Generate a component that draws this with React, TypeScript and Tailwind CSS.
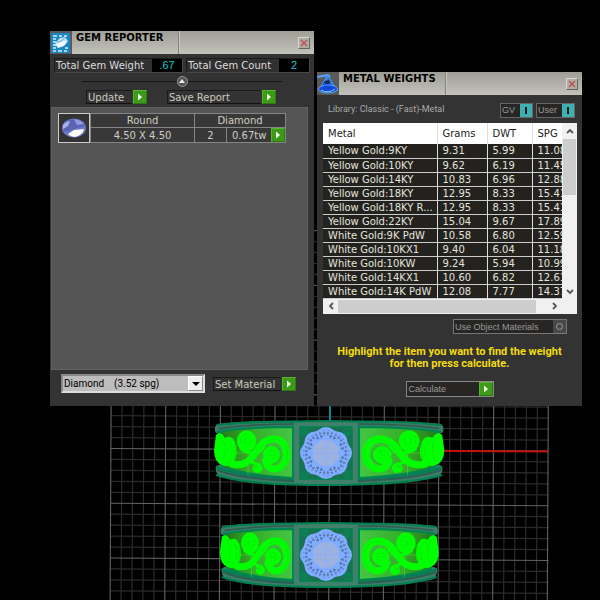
import { useState, type ReactNode } from "react";

const metals: [string, string, string, string][] = [
  ["Yellow Gold:9KY", "9.31", "5.99", "11.08"],
  ["Yellow Gold:10KY", "9.62", "6.19", "11.45"],
  ["Yellow Gold:14KY", "10.83", "6.96", "12.88"],
  ["Yellow Gold:18KY", "12.95", "8.33", "15.41"],
  ["Yellow Gold:18KY R...", "12.95", "8.33", "15.41"],
  ["Yellow Gold:22KY", "15.04", "9.67", "17.89"],
  ["White Gold:9K PdW", "10.58", "6.80", "12.59"],
  ["White Gold:10KX1", "9.40", "6.04", "11.18"],
  ["White Gold:10KW", "9.24", "5.94", "10.99"],
  ["White Gold:14KX1", "10.60", "6.82", "12.61"],
  ["White Gold:14K PdW", "12.08", "7.77", "14.37"],
];

const verdana = "font-['DejaVu_Sans',sans-serif]";
const arial = "font-['Liberation_Sans',sans-serif]";
const roboto = "font-[Roboto,sans-serif]";

function PlayIcon() {
  return (
    <span className="flex h-[14px] w-[14px] shrink-0 items-center justify-center border border-[#56b52d] border-r-[#2a7a10] border-b-[#2a7a10] bg-[#3d9a18]">
      <svg width="6" height="8" viewBox="0 0 6 8" aria-hidden="true">
        <path d="M1 0.5 L5 4 L1 7.5Z" fill="#f4ffe8" />
      </svg>
    </span>
  );
}

function TitleBar({ title, icon }: { title: string; icon: ReactNode }) {
  return (
    <header className="flex h-[23px] items-stretch bg-[#5a5a5a]">
      <span className="flex w-[22px] items-center justify-center">{icon}</span>
      <div className="flex flex-1 items-stretch bg-linear-to-b from-[#a09f97] via-[#b1b0a8] to-[#c4c3bb]">
        <h2 className={`${verdana} w-[107px] border-r border-[#85847c] pl-1 text-[10px] leading-[14px] font-bold whitespace-nowrap text-black`}>
          {title}
        </h2>
        <div className="flex flex-1 items-center justify-end border-l border-[#c9c8c0] pr-1">
          <button aria-label="Close" className="flex h-3 w-3 items-center justify-center border border-[#d8d7d0] border-r-[#68675f] border-b-[#68675f] bg-[#aeada5]">
            <svg width="8" height="8" viewBox="0 0 8 8" aria-hidden="true">
              <path d="M1 1L7 7M7 1L1 7" stroke="#c94444" strokeWidth="1.2" />
            </svg>
          </button>
        </div>
      </div>
    </header>
  );
}

function GemIcon() {
  return (
    <svg width="20" height="22" viewBox="0 0 20 22" aria-hidden="true">
      <rect y="1" width="19" height="20" fill="#1887c4" />
      <path d="M2 4h4M8 4h3M13 4h3M2 7h3M2 10h3M2 13h3M2 16h3M2 19h3M7 19h4M13 19h3M14 16h3" stroke="#d6efff" strokeWidth="1.5" />
      <path d="M5 10L9 6L14 5L17 9L14 13L7 15L4 13Z" fill="#bfe4f7" />
      <path d="M5 13L10 10L16 9L13 14L7 16Z" fill="#f4fbff" />
      <path d="M6 10L10 9L14 6" stroke="#5caed6" fill="none" />
    </svg>
  );
}

function ScaleIcon() {
  return (
    <svg width="22" height="22" viewBox="0 0 22 22" aria-hidden="true">
      <path d="M0 4L11 2L13 4" stroke="#4fa8ff" strokeWidth="2" fill="none" />
      <path d="M10 3L3 16M10 3L9 18M11 3L18 15" stroke="#3f8cff" strokeWidth="1.5" fill="none" />
      <path d="M8 8L5 13H15L12 7Z" fill="#0d2a66" />
      <ellipse cx="11" cy="16" rx="9.500" ry="4" fill="#1247d8" stroke="#58b1ff" />
      <path d="M4 17Q11 21 18 16" stroke="#8ad0ff" fill="none" />
      <path d="M7 11Q10 13 14 11" stroke="#2f6cff" strokeWidth="2" fill="none" />
    </svg>
  );
}

function CabochonIcon() {
  return (
    <svg width="28" height="24" viewBox="0 0 28 24" aria-hidden="true">
      <ellipse cx="14" cy="12" rx="12" ry="9.500" fill="#6c76c8" />
      <path d="M3 9Q8 3 15 3Q23 4 26 10L17 12L8 15L4 15Q2 12 3 9Z" fill="#5b63b4" />
      <path d="M3 9Q5 6 10 5L8 10L3 13Z" fill="#a9b2ee" />
      <path d="M14 3Q21 4 24 8L17 9Z" fill="#929be0" />
      <path d="M8 18L14 14L24 13Q23 19 15 21Q9 20 8 18Z" fill="#fff" />
    </svg>
  );
}

function Total({ label, value, width }: { label: string; value: string; width: string }) {
  return (
    <div className={`${width} flex h-[15px] justify-between border border-[#1b1b1b] border-r-[#484848] border-b-[#484848] bg-[#303030]`}>
      <span className="pl-px text-[10px] leading-[13px] whitespace-nowrap text-[#ddd]">{label}</span>
      <output className={`${arial} w-[30px] bg-black text-center text-[11px] leading-[13px] text-[#14c8cc]`}>{value}</output>
    </div>
  );
}

function ActionButton({ label, width }: { label: string; width: string }) {
  return (
    <button className="flex items-center gap-px text-left">
      <span className={`${width} h-[14px] border border-[#1a1a1a] border-r-[#333] border-b-[#111] pl-px text-[10px] leading-[13px] whitespace-nowrap text-[#cdcabd]`}>
        {label}
      </span>
      <PlayIcon />
    </button>
  );
}

function GemReporter() {
  const cell = "border border-[#858585] p-0 font-normal";
  return (
    <section className={`${verdana} absolute top-[31px] left-[50px] flex h-[375px] w-[264px] flex-col bg-[#333]`}>
      <TitleBar title="GEM REPORTER" icon={<GemIcon />} />
      <div className="flex justify-between px-1 pt-1">
        <Total label="Total Gem Weight" value=".67" width="w-[129px]" />
        <Total label="Total Gem Count" value="2" width="w-[124px]" />
      </div>
      <div className="relative mt-[2px] flex h-3 items-center justify-center">
        <input
          type="range"
          aria-label="Panel position"
          defaultValue={50}
          className="h-3 w-[200px] appearance-none bg-[linear-gradient(#151515,#151515)] bg-[length:100%_1px] bg-center bg-no-repeat [&::-webkit-slider-thumb]:h-[11px] [&::-webkit-slider-thumb]:w-[11px] [&::-webkit-slider-thumb]:appearance-none [&::-webkit-slider-thumb]:rounded-full [&::-webkit-slider-thumb]:border [&::-webkit-slider-thumb]:border-[#999] [&::-webkit-slider-thumb]:bg-[#555]"
        />
        <svg className="pointer-events-none absolute" width="6" height="4" viewBox="0 0 6 4" aria-hidden="true">
          <path d="M0 4L3 0L6 4Z" fill="#eee" />
        </svg>
      </div>
      <div className="flex gap-5 pt-[3px] pl-9">
        <ActionButton label="Update" width="w-[46px]" />
        <ActionButton label="Save Report" width="w-[94px]" />
      </div>
      <div className="mt-[3px] mr-[6px] ml-px flex h-[263px] items-start border border-[#616161] bg-[#555] pt-[5px] pl-[6px]">
        <div className="flex h-[30px] w-8 items-center justify-center border border-[#ccc] bg-[#333]">
          <CabochonIcon />
        </div>
        <table className="w-[195px] table-fixed border-collapse bg-[#383838] text-center text-[10px] leading-[13px] text-[#d0cdc4]">
          <colgroup>
            <col className="w-[104px]" />
            <col className="w-8" />
            <col className="w-[59px]" />
          </colgroup>
          <thead>
            <tr>
              <th className={cell}>Round</th>
              <th className={cell} colSpan={2}>Diamond</th>
            </tr>
          </thead>
          <tbody>
            <tr>
              <td className={cell}>4.50 X 4.50</td>
              <td className={cell}>2</td>
              <td className={cell}>
                <div className="flex h-[14px] items-center justify-between pl-[5px]">
                  0.67tw
                  <button aria-label="Show gem"><PlayIcon /></button>
                </div>
              </td>
            </tr>
          </tbody>
        </table>
      </div>
      <div className="flex items-center gap-2 pt-1 pl-[11px]">
        <div className="relative flex h-[19px] w-[144px] border-2 border-[#ddd] border-t-[#888] border-l-[#888] bg-[#bdbdbd]">
          <select aria-label="Material" className={`${roboto} w-full appearance-none pl-px text-[10px] leading-[15px] whitespace-pre text-black`}>
            <option>{"Diamond\u00a0\u00a0\u00a0\u00a0(3.52 spg)"}</option>
          </select>
          <span className="pointer-events-none absolute top-0 right-0 flex h-[15px] w-[15px] items-center justify-center border border-white border-r-[#888] border-b-[#888] bg-[#eee]">
            <svg width="8" height="4" viewBox="0 0 8 4" aria-hidden="true"><path d="M0 0H8L4 4Z" /></svg>
          </span>
        </div>
        <ActionButton label="Set Material" width="w-[68px]" />
      </div>
    </section>
  );
}

function Toggle({ label }: { label: string }) {
  const [on, setOn] = useState(true);
  return (
    <label className={`${arial} flex h-[15px] items-center gap-[5px] border border-[#666] bg-[#272624] pl-px text-[9px] leading-[13px] text-[#999]`}>
      <span className="pt-px">{label}</span>
      <span className="relative flex h-[13px] w-3">
        <input type="checkbox" checked={on} onChange={() => setOn(!on)} className="h-[13px] w-3 appearance-none bg-[#2b8586] checked:bg-[#3fb0b2]" />
        <span className="pointer-events-none absolute top-[3px] left-[5px] h-[7px] w-[2px] bg-[#0b1d1d]" />
      </span>
    </label>
  );
}

function Chevron({ d }: { d: string }) {
  return (
    <svg width="8" height="8" viewBox="0 0 8 8" fill="none" stroke="#555" strokeWidth="1.8" aria-hidden="true">
      <path d={d} />
    </svg>
  );
}

function MetalTable() {
  const line = "border-l border-[#ddd]";
  return (
    <div className="mr-[5px] ml-[6px] bg-[#f0f0f0]">
      <div className="flex">
        <div className="min-w-0 flex-1 overflow-x-auto [scrollbar-width:none]">
          <table className="w-[260px] table-fixed border-collapse text-left text-[10px]">
            <colgroup>
              <col className="w-[114px]" />
              <col className="w-[50px]" />
              <col className="w-[45px]" />
              <col className="w-[51px]" />
            </colgroup>
            <thead>
              <tr className="h-[21px] bg-white text-[#222]">
                {["Metal", "Grams", "DWT", "SPG"].map((h, i) => (
                  <th key={h} className={`p-0 pl-[5px] font-normal ${i ? line : ""}`}>{h}</th>
                ))}
              </tr>
            </thead>
            <tbody>
              {metals.map((row) => (
                <tr key={row[0]} className="h-[14px] border-b border-[#ccc] bg-[#23221f] leading-[13px] text-[#e4e4de]">
                  {row.map((v, i) => (
                    <td key={i} className={`p-0 pl-[5px] whitespace-nowrap ${i ? line : ""}`}>{v}</td>
                  ))}
                </tr>
              ))}
            </tbody>
          </table>
        </div>
        <div className="flex w-[15px] flex-col items-center">
          <span className="flex h-4 items-center"><Chevron d="M1 6L4 3L7 6" /></span>
          <span className="h-[56px] w-[13px] bg-[#cdcdcd]" />
          <span className="flex flex-1 items-end pb-[3px]"><Chevron d="M1 2L4 5L7 2" /></span>
        </div>
      </div>
      <div className="flex h-[15px] items-center pr-[18px]">
        <span className="flex w-[15px] justify-center"><Chevron d="M6 1L3 4L6 7" /></span>
        <span className="h-[13px] w-[198px] bg-[#cdcdcd]" />
        <span className="flex flex-1 justify-end"><Chevron d="M2 1L5 4L2 7" /></span>
      </div>
    </div>
  );
}

function MetalWeights() {
  return (
    <section className={`${verdana} absolute top-[72px] left-[317px] flex h-[334px] w-[265px] flex-col bg-[#333]`}>
      <TitleBar title="METAL WEIGHTS" icon={<ScaleIcon />} />
      <div className="flex h-[28px] items-center justify-between pr-[7px] pl-[11px]">
        <span className={`${roboto} text-[9px] leading-[13px] text-[#aaa]`}>Library: Classic - (Fast)-Metal</span>
        <div className="flex gap-[3px] pt-[2px]">
          <Toggle label="GV" />
          <Toggle label="User" />
        </div>
      </div>
      <MetalTable />
      <div className="flex justify-end pt-[5px] pr-[15px]">
        <label className={`${arial} flex h-[15px] w-[114px] items-center justify-between border border-[#777] bg-[#272624] pl-px text-[9px] leading-[13px] text-[#999]`}>
          <span className="pt-[2px]">Use Object Materials</span>
          <span className="relative flex h-[13px] w-[13px] items-center justify-center bg-[#484848]">
            <input type="checkbox" className="h-[7px] w-[7px] appearance-none rounded-full border border-[#999] checked:bg-[#3fb0b2]" />
          </span>
        </label>
      </div>
      <p className={`${roboto} pt-[12px] text-center text-[11px] leading-3 font-bold text-[#f2dc0b]`}>
        Highlight the item you want to find the weight
        <br />
        for then press calculate.
      </p>
      <div className="flex justify-center pt-[11px]">
        <button className={`${arial} flex h-[16px] w-[88px] items-center justify-between border border-[#888] bg-[#272624] pl-[2px] text-[9px] leading-[13px] text-[#999]`}>
          <span className="pt-px">Calculate</span>
          <PlayIcon />
        </button>
      </div>
    </section>
  );
}

function Grid() {
  const steps = Array.from({ length: 41 }, (_, i) => i);
  return (
    <g>
      {[false, true].map((major) =>
        steps
          .filter((i) => (i % 5 === 0) === major)
          .map((i) => {
            const x = 112 + i * 10.93;
            const y = 230 + i * 10.95;
            return (
              <g key={i} stroke={major ? "#626262" : "#2b2b2b"} strokeWidth={major ? 1.1 : 1.2}>
                <path d={`M${x} 230L${x - 2} 620`} />
                <path d={`M111 ${y - 0.5}L548.5 ${y + 2}`} />
              </g>
            );
          }),
      )}
    </g>
  );
}

function ScrollPanel() {
  return (
    <g>
      <path d="M221 431Q255 427 293 427V478Q250 476 222 467Z" fill="url(#panel)" stroke="#008653" strokeWidth="2" />
      <path d="M222 453H292M248 430V475" stroke="#58d23c" strokeWidth="0.6" />
      <g fill="none" stroke="#00ff00" strokeLinecap="round">
        <path d="M232 464C244 467 250 461 256 452C261 443 267 439 274 439C282 439 286.500 446 286.500 454C286.500 463 281 469 275 469C270 469 266.500 466 265.500 461" strokeWidth="7" />
        <path d="M252 456C248 460 252 463 257 464" strokeWidth="3" />
        <path d="M241 449C248 454 258 455 264 447" strokeWidth="3" />
      </g>
      <ellipse cx="246.500" cy="441" rx="9.700" ry="10.500" fill="#00ff00" />
      <ellipse cx="271.500" cy="455" rx="8.500" ry="9" fill="#00ff00" />
      <circle cx="257.500" cy="468" r="5" fill="#00ff00" />
      <path d="M253 466Q257 469 257 465" fill="none" stroke="#35b727" strokeWidth="0.8" />
      <path d="M216 435Q219 431 223 435L225 438Q231 434 235 442Q239 453 234 462Q229 468 222 465Q214 462 214 450Z" fill="#00ff00" />
      <path d="M274 445Q281.500 448 281.500 456Q279 463 272 464.500" fill="none" stroke="#22b822" strokeWidth="1.2" />
      <g fill="none" stroke="#00c00c" strokeWidth="0.8" strokeDasharray="1 1.500">
        <path d="M226 440Q232 441 232 450Q232 459 227 462M222 438Q228 450 222 462M234 444Q237 453 233 461" />
        <path d="M260 449C267 438 280 437 285 444C291 455 286 467 278 470" />
        <path d="M266 456Q268 448 275 452Q278 458 271 459M269 455H274" />
        <path d="M241 443Q239 435 246 434Q252 435 251 442Q249 446 245 443Q244 439 247 438" />
      </g>
    </g>
  );
}

function HalfBand({ ratio }: { ratio: number }) {
  const side = `translate(${293 * (1 - ratio)} 0) scale(${ratio} 1)`;
  return (
    <g>
      <path d="M292 421H326V485H292Z" fill="#41806a" />
      <g transform={side}>
        <path d="M217 424Q245 421 294 421V484.500Q240 483 218 475Q215 472 216 466L223 464V432L216 433Q213 428 217 424Z" fill="#3d7d67" />
        <path d="M217 425Q245 421.500 294 421.500M217 432Q250 427 294 427M216 467Q236 476 294 479M216 475Q240 483 294 484.500" fill="none" stroke="#00804f" strokeWidth="2.200" />
        <path d="M219 428.500Q250 424 294 424" fill="none" stroke="#2c5c50" strokeWidth="1.500" />
        <path d="M217 470Q240 479 294 481" fill="none" stroke="#286053" strokeWidth="2" />
        <ScrollPanel />
      </g>
      <path d="M293 421.500Q310 421 326 421M293 484.500Q310 485 326 485" fill="none" stroke="#00804f" strokeWidth="2" />
      <path d="M326.500 427H300V479H326.500" fill="#1b7053" stroke="#00804f" strokeWidth="1.500" />
      <g fill="none" stroke="#009057" strokeWidth="1">
        <circle cx="305" cy="431.500" r="3.500" />
        <circle cx="305" cy="474.500" r="3.500" />
        <circle cx="305" cy="431.500" r="1.500" />
        <circle cx="305" cy="474.500" r="1.500" />
      </g>
    </g>
  );
}

function GemHead() {
  const lobes = Array.from({ length: 8 }, (_, i) => i * 45);
  return (
    <g transform="translate(326 453)">
      <circle r="24" fill="#80adff" />
      {lobes.map((a) => (
        <circle key={a} cx="0" cy="-15.500" r="10.500" fill="#80adff" transform={`rotate(${a})`} />
      ))}
      {lobes.map((a) => (
        <g key={a} transform={`rotate(${a + 22.5})`} fill="#5473a6">
          <path d="M-1 -15L-4 -17L-1 -19ZM1 -15L4 -17L1 -19ZM-1 -20L-3.500 -19L-2 -22.500ZM1 -20L3.500 -19L2 -22.500ZM-5 -17L-7.500 -19L-5 -20.500ZM5 -17L7.500 -19L5 -20.500ZM-8 -20.500L-6 -22L-5 -21.500ZM8 -20.500L6 -22L5 -21.500Z" />
        </g>
      ))}
      <path d="M-5.500 -13.500H5.500L13.500 -5.500V5.500L5.500 13.500H-5.500L-13.500 5.500V-5.500Z" fill="#9db2df" stroke="#80adff" strokeWidth="1.500" />
      <path d="M0 -14V14M-14 0H14" stroke="#82adff" strokeWidth="0.800" />
      <circle r="6" fill="none" stroke="#8fb0ee" strokeWidth="0.800" />
    </g>
  );
}

function Ring({ y, left, right }: { y: number; left: number; right: number }) {
  return (
    <g transform={`translate(0 ${y})`}>
      <HalfBand ratio={left} />
      <g transform="translate(652 0) scale(-1 1)">
        <HalfBand ratio={right} />
      </g>
      <GemHead />
    </g>
  );
}

export default function App() {
  return (
    <main className="relative h-screen min-h-[600px] w-full overflow-hidden bg-black">
      <svg className="absolute top-0 left-0" width="600" height="620" viewBox="0 0 600 620" role="img" aria-label="Viewport with two ring models">
        <defs>
          <linearGradient id="panel">
            <stop offset="0" stopColor="#257b18" />
            <stop offset="0.400" stopColor="#36ad28" />
            <stop offset="1" stopColor="#44c744" />
          </linearGradient>
        </defs>
        <Grid />
        <path d="M330 400V422" stroke="#008b99" strokeWidth="2" />
        <path d="M440 451L548 451.500" stroke="#c31008" strokeWidth="2" />
        <Ring y={0} left={1} right={1.08} />
        <Ring y={102} left={0.925} right={1.01} />
      </svg>
      <GemReporter />
      <MetalWeights />
    </main>
  );
}
